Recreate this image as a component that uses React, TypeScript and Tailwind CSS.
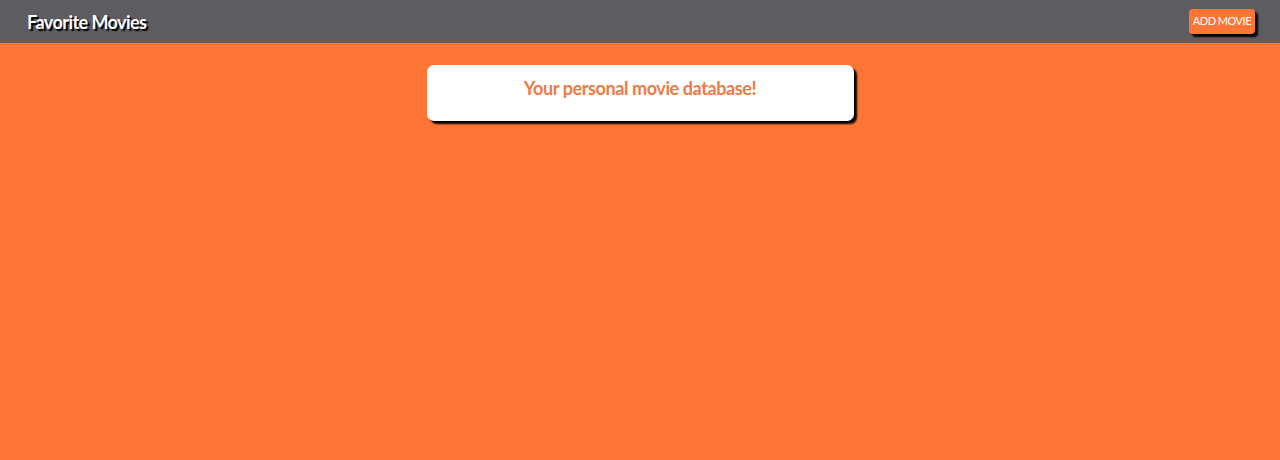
export default function App() {
  return (
    <div className="min-h-[460px] bg-[#ff7536] font-['Lato','Noto_Sans',sans-serif]">
      <header className="flex h-[43px] items-center justify-between bg-[#5c5c61] pl-[27px] pr-[25px]">
        <h1 className="pt-[2px] text-[18px] font-bold tracking-[-0.55px] text-white [text-shadow:2px_2px_1px_#000]">
          Favorite Movies
        </h1>
        <button className="h-[25px] rounded-[4px] bg-[#ff7536] px-[4px] text-[11px] tracking-[-0.5px] text-white shadow-[3px_3px_2px_#000]">
          ADD MOVIE
        </button>
      </header>
      <main className="flex justify-center pt-[22px]">
        <div className="flex h-[56px] w-[427px] justify-center rounded-[7px] bg-white pt-[10px] shadow-[3px_3px_2px_#000]">
          <p className="text-[18px] font-bold tracking-[-0.4px] text-[#f07a45]">Your personal movie database!</p>
        </div>
      </main>
    </div>
  );
}
